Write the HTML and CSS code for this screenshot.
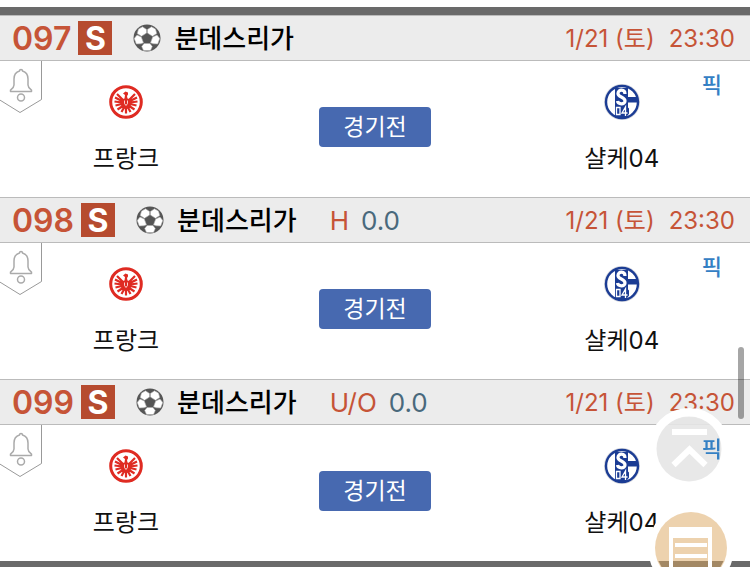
FILE: index.html
```
<!DOCTYPE html>
<html lang="ko">
<head>
<meta charset="utf-8">
<meta name="viewport" content="width=device-width, initial-scale=1">
<title>분데스리가</title>
<link rel="stylesheet" href="styles.css">
</head>
<body>
<svg class="defs" aria-hidden="true">
  <symbol id="ball" viewBox="0 0 28 28">
    <circle cx="14" cy="14" r="13.500" fill="#555"/>
    <path fill="#fff" stroke="#aaa" stroke-width=".6" stroke-linejoin="round" d="M13.600 5.500L9.500 2.800 5.500 5 4.200 9.500 8.500 12.300 13.600 9zM14.400 5.500L18.500 2.800 22.500 5 23.800 9.500 19.500 12.300 14.400 9zM8.300 13L4 11 1.200 14.500 3.300 20 8 19.800 10.500 18.800zM19.700 13L24 11 26.800 14.500 24.700 20 20 19.800 17.500 18.800zM11 19.500h6l2.300 3-1.800 4H10.500L8.700 22.500z"/>
  </symbol>
  <symbol id="bell" viewBox="0 0 42 52">
    <path fill="#fff" stroke="#999" d="M41.500-1v39.500L20 51.500-1 38.500V-1"/>
    <path fill="none" stroke="#aaa" stroke-width="1.500" stroke-linejoin="round" d="M19.500 10a1.500 1.500 0 0 1 3 0c3.500 1 5.500 4 5.500 8v6c0 2.500 1.500 3.500 3.500 5v1.500h-21V29c2-1.500 3.500-2.500 3.500-5v-6c0-4 2-7 5.500-8z"/>
    <circle cx="21" cy="36.500" r="3.500" fill="none" stroke="#aaa" stroke-width="1.500"/>
  </symbol>
  <symbol id="eagle" viewBox="0 0 34 34">
    <circle cx="17" cy="17" r="15.300" fill="#fff" stroke="#df2b22" stroke-width="3"/>
    <path fill="none" stroke="#df2b22" stroke-width="2.200" d="M17 18L8 9M17 18L6 12.500M17 18L5.500 16.500M17 18L6.500 20.500M17 19L8.500 24.500M17 19L12.500 27M17 18L26 9M17 18L28 12.500M17 18L28.500 16.500M17 18L27.500 20.500M17 19L25.500 24.500M17 19L21.500 27M17 19v9.500"/>
    <path fill="#df2b22" d="M14 8.500L16.500 6.500l2.500 1v2l-1 1.500.5 2.500 3 1 1.500 3.500-2 4-4 2.500-4-2.500-2-4 1.500-3.500 3-1 .5-3.500z"/>
    <path fill="none" stroke="#fff" stroke-width=".8" d="M15.500 15.500v3l1.500 2 1.500-2v-3"/>
  </symbol>
  <symbol id="schalke" viewBox="0 0 38 38">
    <circle cx="19" cy="19" r="18" fill="#d3d5dc"/>
    <circle cx="19" cy="19" r="16" fill="#fff" stroke="#1b3c94" stroke-width="2.400"/>
    <path fill="#1b3c94" d="M12 5h13v9h10v5.500H25v5l1 1v5l-3 4H12z"/>
    <path fill="none" stroke="#fff" stroke-width="3.200" d="M22 11c0-5-7-5-7-.5 0 4 7 3 7 7.500 0 4-7 3.500-7.500 0"/>
    <path fill="none" stroke="#fff" stroke-width="1.300" d="M13.500 24.500h3.500v7h-3.500zM22.500 33v-9l-3.500 6h5.500"/>
  </symbol>
</svg>

<main class="matches">
  <article class="match">
    <header class="match-head">
      <span class="number">097</span><span class="type">S</span>
      <svg class="ball"><use href="#ball"/></svg>
      <h2 class="league">분데스리가</h2>
      <time class="date"><span>1/21 (토)</span><span>23:30</span></time>
    </header>
    <div class="match-body">
      <button class="alarm" aria-label="알림"><svg><use href="#bell"/></svg></button>
      <div class="team"><svg class="crest"><use href="#eagle"/></svg><span>프랑크</span></div>
      <button class="status">경기전</button>
      <div class="team"><svg class="crest large"><use href="#schalke"/></svg><span>샬케04</span></div>
      <a class="pick" href="#">픽</a>
    </div>
  </article>
  <article class="match">
    <header class="match-head">
      <span class="number">098</span><span class="type">S</span>
      <svg class="ball"><use href="#ball"/></svg>
      <h2 class="league">분데스리가</h2>
      <p class="line"><span class="kind">H</span><span class="value">0.0</span></p>
      <time class="date"><span>1/21 (토)</span><span>23:30</span></time>
    </header>
    <div class="match-body">
      <button class="alarm" aria-label="알림"><svg><use href="#bell"/></svg></button>
      <div class="team"><svg class="crest"><use href="#eagle"/></svg><span>프랑크</span></div>
      <button class="status">경기전</button>
      <div class="team"><svg class="crest large"><use href="#schalke"/></svg><span>샬케04</span></div>
      <a class="pick" href="#">픽</a>
    </div>
  </article>
  <article class="match">
    <header class="match-head">
      <span class="number">099</span><span class="type">S</span>
      <svg class="ball"><use href="#ball"/></svg>
      <h2 class="league">분데스리가</h2>
      <p class="line"><span class="kind">U/O</span><span class="value">0.0</span></p>
      <time class="date"><span>1/21 (토)</span><span>23:30</span></time>
    </header>
    <div class="match-body">
      <button class="alarm" aria-label="알림"><svg><use href="#bell"/></svg></button>
      <div class="team"><svg class="crest"><use href="#eagle"/></svg><span>프랑크</span></div>
      <button class="status">경기전</button>
      <div class="team"><svg class="crest large"><use href="#schalke"/></svg><span>샬케04</span></div>
      <a class="pick" href="#">픽</a>
    </div>
  </article>
</main>

<button class="float to-top" aria-label="맨 위로">
  <svg viewBox="0 0 88 88">
    <circle cx="44" cy="44" r="36.500" fill="none" stroke="#fff" stroke-width="9"/>
    <circle cx="44" cy="44" r="32.500" fill="#e6e6e6" fill-opacity=".9"/>
    <path fill="none" stroke="#fff" stroke-width="6" d="M27 27h35M28.500 60L44.500 44.500l16 15.500"/>
  </svg>
</button>
<button class="float slip" aria-label="구매 목록">
  <svg viewBox="0 0 88 88">
    <circle cx="44" cy="44" r="39" fill="none" stroke="#fff" stroke-width="8"/>
    <circle cx="44" cy="44" r="36" fill="#dba55d" fill-opacity=".5"/>
    <path fill="#fff" fill-rule="evenodd" d="M22 23h43v50H22zM26 34v34h35V34z"/>
    <path stroke="#fff" stroke-width="4" d="M28 41h32M28 52h32"/>
  </svg>
</button>
<div class="scroll-thumb"></div>
</body>
</html>
```
FILE: styles.css
```
* {
  box-sizing: border-box;
}

body {
  margin: 0;
  padding-top: 7px;
  background: #fff;
  color: #111;
  font-family: Inter, "Noto Sans CJK KR", sans-serif;
  font-size: 24px;
  line-height: 32px;
  overflow: hidden;
}

button {
  padding: 0;
  border: 0;
  background: none;
  color: inherit;
  font: inherit;
}

svg {
  display: block;
}

.defs {
  position: absolute;
  width: 0;
  height: 0;
}

.matches {
  border-top: 8px solid #6a6a6a;
  border-bottom: 6px solid #6a6a6a;
}

.match-head {
  display: flex;
  align-items: center;
  height: 46px;
  padding: 0 15px 0 12px;
  border-top: 1px solid #bbb;
  border-bottom: 1px solid #bbb;
  background: #ececec;
}

.number {
  padding-top: 2px;
  color: #c65437;
  font-size: 32px;
  font-weight: 600;
}

.type {
  width: 34px;
  height: 34px;
  margin-left: 7px;
  background: #b64b2f;
  color: #fff;
  font-size: 32px;
  font-weight: 700;
  line-height: 36px;
  text-align: center;
}

.ball {
  width: 28px;
  height: 28px;
  margin: 0 13px 0 21px;
}

.league {
  margin: 0;
  padding-top: 2px;
  color: #000;
  font-size: 26px;
  font-weight: 500;
}

.line {
  display: flex;
  gap: 12px;
  margin: 0 0 0 33px;
  padding-top: 2px;
  font-size: 26px;
}

.kind,
.date {
  color: #c65437;
}

.value {
  color: #49697c;
}

.date {
  display: flex;
  gap: 14px;
  margin-left: auto;
  padding-top: 2px;
}

.match-body {
  position: relative;
  display: grid;
  grid-template-columns: 33.6% 32.8% 33%;
  align-items: center;
  justify-items: center;
  height: 136px;
}

.alarm {
  position: absolute;
  top: 0;
  left: 0;
}

.alarm svg {
  width: 42px;
  height: 52px;
}

.team {
  display: flex;
  flex-direction: column;
  align-items: center;
  gap: 22px;
}

.crest {
  width: 34px;
  height: 38px;
}

.large {
  width: 38px;
}

.status {
  width: 112px;
  height: 40px;
  margin-bottom: 4px;
  border-radius: 4px;
  background: #4769b0;
  color: #fff;
  font-size: 23px;
}

.pick {
  position: absolute;
  top: 8px;
  right: 28px;
  color: #3480c4;
  font-size: 22px;
  font-weight: 500;
  text-decoration: none;
}

.match:last-child .pick {
  z-index: 2;
}

.float {
  position: fixed;
  width: 88px;
  height: 88px;
}

.to-top {
  right: 17px;
  bottom: 74px;
}

.slip {
  right: 15px;
  bottom: -25px;
}

.scroll-thumb {
  position: fixed;
  right: 6px;
  bottom: 148px;
  width: 6px;
  height: 72px;
  border-radius: 3px;
  background: rgba(0, 0, 0, 0.35);
}
```
